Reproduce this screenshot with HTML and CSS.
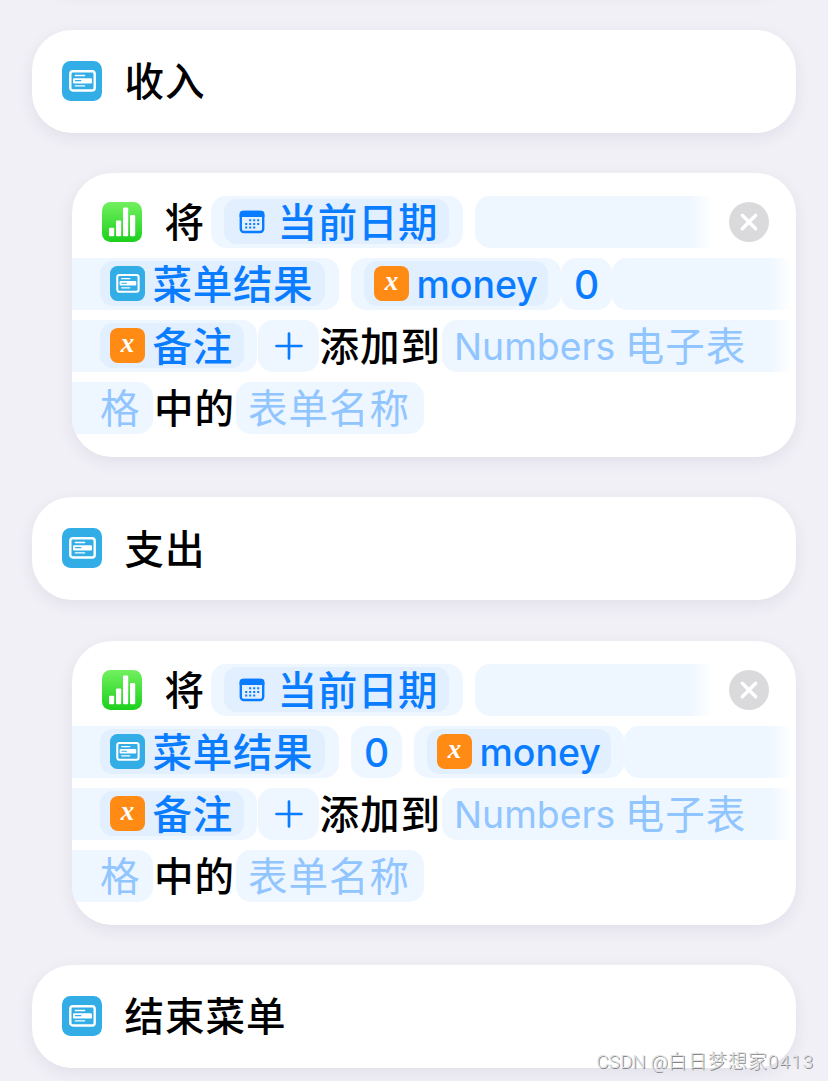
FILE: index.html
```html
<!DOCTYPE html>
<html lang="zh-CN">
<head>
    <meta charset="UTF-8">
    <meta name="viewport" content="width=device-width, initial-scale=1.0">
    <title>快捷指令</title>
    <link rel="stylesheet" href="styles.css">
</head>
<body>
    <svg class="defs" width="0" height="0">
        <symbol id="menu" viewBox="0 0 40 40">
            <rect width="40" height="40" rx="8.5" fill="#32ade6"/>
            <rect x="8.3" y="10.3" width="24.4" height="19.2" rx="2.6" fill="none" stroke="#fff" stroke-width="2.4"/>
            <rect x="11" y="17.2" width="19" height="5.2" rx="1.2" fill="#fff"/>
            <path d="M13.3 14.5h9.3M13.3 24.9h9.3" stroke="#fff" stroke-width="1.4" stroke-linecap="round"/>
            <path d="M13.5 19.7h5.3" stroke="#32ade6" stroke-width="1.2" stroke-linecap="round"/>
        </symbol>
        <symbol id="numbers" viewBox="0 0 40 40">
            <linearGradient id="green" x1="0" y1="0" x2="0" y2="1">
                <stop offset="0" stop-color="#72f05f"/>
                <stop offset="1" stop-color="#1bd01c"/>
            </linearGradient>
            <rect width="40" height="40" rx="8.5" fill="url(#green)"/>
            <g fill="#fff">
                <rect x="7" y="25.7" width="5.2" height="8.6" rx="1"/>
                <rect x="14" y="18.5" width="5.2" height="15.8" rx="1"/>
                <rect x="21" y="5.6" width="5.2" height="28.7" rx="1"/>
                <rect x="28" y="13" width="5.2" height="21.3" rx="1"/>
            </g>
        </symbol>
        <symbol id="calendar" viewBox="0 0 26 24">
            <rect x="1.8" y="2" width="22.4" height="20" rx="3" fill="none" stroke="#0a7cff" stroke-width="2.4"/>
            <path d="M.6 7V4.1a3.3 3.3 0 0 1 3.3-3.3h18.2a3.3 3.3 0 0 1 3.3 3.3V7z" fill="#0a7cff"/>
            <path d="M10.2 10.2h10.4M6.2 13.9h14.4M6.2 17.6h10.4" stroke="#0a7cff" stroke-width="2" stroke-dasharray="2 2"/>
        </symbol>
        <symbol id="close" viewBox="0 0 40 40">
            <circle cx="20" cy="20" r="20" fill="#dadadc"/>
            <path d="M13.3 13.3l13.4 13.4M26.7 13.3L13.3 26.7" stroke="#fff" stroke-width="3.4" stroke-linecap="round"/>
        </symbol>
        <symbol id="plus" viewBox="0 0 28 28">
            <path d="M14 1.5v25M1.5 14h25" stroke="#0a7cff" stroke-width="2.7" stroke-linecap="round"/>
        </symbol>
    </svg>

    <main class="actions">
        <div class="card above"></div>

        <div class="card menu-item">
            <svg class="app-icon"><use href="#menu"/></svg>
            <span class="text">收入</span>
        </div>

        <div class="card action">
            <div class="row first">
                <svg class="app-icon"><use href="#numbers"/></svg>
                <span class="text">将</span>
                <span class="field date"><span class="token"><svg class="cal"><use href="#calendar"/></svg>当前日期</span></span>
                <span class="field blank fade"></span>
                <svg class="close"><use href="#close"/></svg>
            </div>
            <div class="row">
                <span class="field start result"><span class="token"><svg class="icon"><use href="#menu"/></svg>菜单结果</span></span>
                <span class="field money"><span class="token"><i class="icon var">x</i><b>money</b></span></span>
                <span class="field zero">0</span>
                <span class="field rest fade"></span>
            </div>
            <div class="row">
                <span class="field start note"><span class="token"><i class="icon var">x</i>备注</span></span>
                <span class="field add"><svg class="plus"><use href="#plus"/></svg></span>
                <span class="text">添加到</span>
                <span class="field rest fade placeholder"><span class="latin">Numbers</span>电子表</span>
            </div>
            <div class="row">
                <span class="field start tail placeholder">格</span>
                <span class="text">中的</span>
                <span class="field sheet placeholder">表单名称</span>
            </div>
        </div>

        <div class="card menu-item">
            <svg class="app-icon"><use href="#menu"/></svg>
            <span class="text">支出</span>
        </div>

        <div class="card action">
            <div class="row first">
                <svg class="app-icon"><use href="#numbers"/></svg>
                <span class="text">将</span>
                <span class="field date"><span class="token"><svg class="cal"><use href="#calendar"/></svg>当前日期</span></span>
                <span class="field blank fade"></span>
                <svg class="close"><use href="#close"/></svg>
            </div>
            <div class="row">
                <span class="field start result"><span class="token"><svg class="icon"><use href="#menu"/></svg>菜单结果</span></span>
                <span class="field zero spaced">0</span>
                <span class="field money"><span class="token"><i class="icon var">x</i><b>money</b></span></span>
                <span class="field rest fade"></span>
            </div>
            <div class="row">
                <span class="field start note"><span class="token"><i class="icon var">x</i>备注</span></span>
                <span class="field add"><svg class="plus"><use href="#plus"/></svg></span>
                <span class="text">添加到</span>
                <span class="field rest fade placeholder"><span class="latin">Numbers</span>电子表</span>
            </div>
            <div class="row">
                <span class="field start tail placeholder">格</span>
                <span class="text">中的</span>
                <span class="field sheet placeholder">表单名称</span>
            </div>
        </div>

        <div class="card menu-item">
            <svg class="app-icon"><use href="#menu"/></svg>
            <span class="text">结束菜单</span>
        </div>
    </main>
    <div class="watermark">CSDN @<span>白日梦想家0413</span></div>
</body>
</html>
```
FILE: styles.css
```css
* {
    box-sizing: border-box;
}

body {
    margin: 0;
    height: 1081px;
    overflow: hidden;
    position: relative;
    background-color: #f1f0f6;
    font-family: Inter, "Noto Sans CJK SC", sans-serif;
    font-size: 39.5px;
    font-weight: 500;
    letter-spacing: 1px;
    line-height: 52px;
    color: #000;
}

.defs {
    display: block;
}

.actions {
    display: flow-root;
    padding: 0 32px;
    height: 1081px;
    overflow: hidden;
}

.card {
    background-color: #fff;
    border-radius: 40px;
    box-shadow: 0 5px 16px rgba(50, 40, 90, 0.08);
    margin-bottom: 40.4px;
}

.above {
    height: 100px;
    margin-top: -110.6px;
}

.menu-item {
    display: flex;
    align-items: center;
    height: 103px;
    padding: 0 0 1px 30px;
}

.action {
    margin-left: 40px;
    height: 283.8px;
    padding-top: 22.8px;
    overflow: hidden;
}

.app-icon {
    width: 40px;
    height: 40px;
    flex: none;
    margin-right: 22.5px;
}

.text {
    white-space: nowrap;
    padding-top: 3px;
}

.row {
    display: flex;
    align-items: center;
    height: 52px;
    margin-bottom: 10px;
}

.first {
    padding: 0 27px 0 30px;
}

.field {
    display: flex;
    align-items: center;
    flex: none;
    height: 52px;
    border-radius: 15px;
    background-color: #eef6ff;
    color: #0a7cff;
    white-space: nowrap;
}

.start {
    border-radius: 0 15px 15px 0;
    padding-left: 28px;
}

.token {
    display: flex;
    align-items: center;
    height: 45px;
    border-radius: 13px;
    background-color: #e1efff;
    padding: 2px 0 0 10px;
    letter-spacing: 0.7px;
}

.date {
    width: 252px;
    margin-left: 5.5px;
    padding-left: 13px;
}

.date .token {
    width: 225px;
    padding-left: 15px;
}

.cal {
    width: 26px;
    height: 24px;
    margin: 0 13px 2px 0;
}

.blank {
    flex: 1;
    margin: 0 16px 0 12px;
}

.fade {
    border-radius: 15px 0 0 15px;
    background: linear-gradient(to left, #fff, #eef6ff 24px);
}

.close {
    width: 40px;
    height: 40px;
    flex: none;
    margin-top: 1px;
}

.result {
    width: 267px;
}

.result .token {
    width: 225px;
}

.icon {
    width: 35px;
    height: 35px;
    flex: none;
    margin: 0 7.5px 3px 0;
}

.var {
    border-radius: 8px;
    background-color: #ff8a14;
    color: #fff;
    font: italic bold 27px/31px "Liberation Serif", serif;
    letter-spacing: 0;
    text-align: center;
}

.money {
    width: 210px;
    margin-left: 12px;
    padding-left: 13px;
}

.money .token {
    width: 184px;
}

.money b {
    font-size: 37.5px;
    font-weight: 500;
    letter-spacing: 0;
}

.zero {
    width: 51px;
    justify-content: center;
    letter-spacing: 0;
    font-size: 39px;
    padding-top: 2px;
}

.spaced {
    margin-left: 12px;
}

.rest {
    flex: 1;
    margin-right: 4px;
}

.note {
    width: 185px;
}

.note .token {
    width: 144px;
}

.add {
    width: 61px;
    margin: 0 0.5px 0 1px;
    padding-top: 1px;
    justify-content: center;
}

.plus {
    width: 28px;
    height: 28px;
}

.placeholder {
    color: #91c5ff;
    font-weight: 400;
    padding-top: 3px;
}

.rest.placeholder {
    margin-left: 1px;
    padding-left: 12px;
}

.latin {
    font-size: 37.3px;
    letter-spacing: 0;
    margin-right: 9.5px;
}

.tail {
    width: 81px;
    margin-right: 1px;
}

.sheet {
    width: 188px;
    margin-left: 1px;
    padding-left: 12px;
}

.watermark {
    position: absolute;
    right: 14px;
    bottom: 6px;
    font: 300 19px/26px Roboto, "Noto Sans CJK SC", sans-serif;
    letter-spacing: 0;
    color: #e0e0e2;
    text-shadow: 1px 1px 0 #888;
}

.watermark span {
    letter-spacing: 1px;
}
```
